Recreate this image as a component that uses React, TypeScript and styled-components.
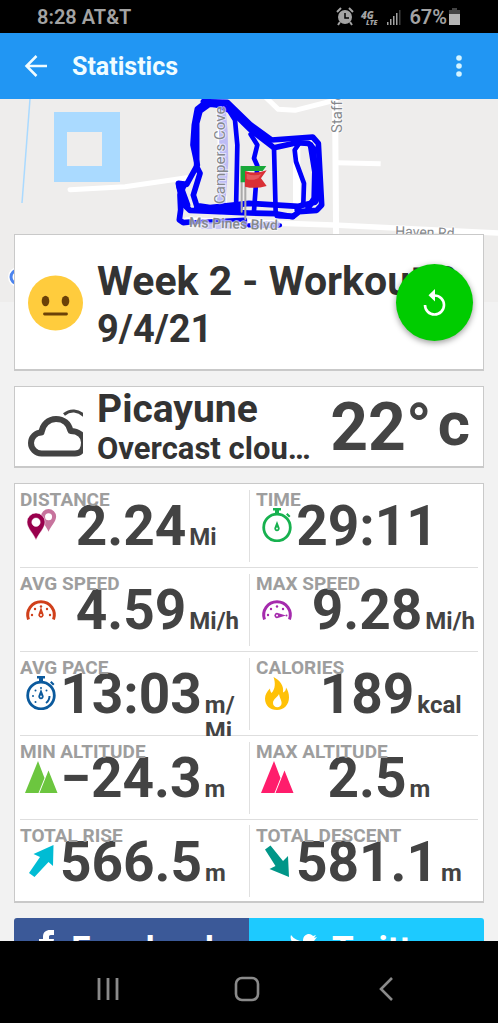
import React from "react";
import styled, { createGlobalStyle } from "styled-components";

const GlobalStyle = createGlobalStyle`
  * { box-sizing: border-box; }
  body { margin: 0; background: #000; font-family: Roboto, "Liberation Sans", sans-serif; }
  button { font: inherit; border: 0; padding: 0; background: none; color: inherit; cursor: pointer; }
  h1, h2, p, dl, dt, dd { margin: 0; }
  svg { display: block; flex: none; }
`;

const Screen = styled.div`
  display: flex;
  flex-direction: column;
  height: 100vh;
  background: #f2f2f2;
`;

const StatusBar = styled.div`
  flex: none;
  display: flex;
  align-items: center;
  justify-content: space-between;
  height: 33px;
  padding: 0 37px;
  background: #000;
  color: #a3a3a3;
  font-size: 20px;
  font-weight: 600;
`;

const StatusGroup = styled.div`
  display: flex;
  align-items: center;
`;

const AppBar = styled.header`
  flex: none;
  display: flex;
  align-items: center;
  height: 66px;
  padding: 0 24px;
  background: #2196f3;
  color: #f0fcff;
`;

const BarTitle = styled.h1`
  flex: 1;
  margin-left: 24px;
  padding-top: 2px;
  font-size: 25px;
  line-height: 32px;
  font-weight: 700;
`;

const Content = styled.main`
  flex: 1;
  min-height: 0;
  overflow: hidden;
`;

const MapSvg = styled.svg`
  width: 100%;
  height: 203px;
`;

const Stack = styled.div`
  position: relative;
  display: flex;
  flex-direction: column;
  gap: 15px;
  margin-top: -68px;
  padding: 0 14px;
`;

const Card = styled.section`
  position: relative;
  background: #fff;
  border: 1px solid #c9c9c9;
  border-bottom-width: 2px;
`;

const SummaryCard = styled(Card)<{ $height: number; $top?: number }>`
  display: flex;
  align-items: center;
  gap: 14px;
  min-height: ${(p) => p.$height}px;
  padding: ${(p) => p.$top ?? 0}px 13px 0;
  color: #333;
`;

const SummaryText = styled.div`
  flex: 1;
  min-width: 0;
`;

const Line = styled.p<{ $size: number; $line: number }>`
  overflow: hidden;
  white-space: nowrap;
  text-overflow: ellipsis;
  font-size: ${(p) => p.$size}px;
  line-height: ${(p) => p.$line}px;
  font-weight: 700;
`;

const Temperature = styled.p`
  display: flex;
  align-items: center;
  padding-top: 2px;
  margin-left: 2px;
  color: #444;
  font-size: 66px;
  line-height: 76px;
  font-weight: 700;
`;

const Celsius = styled.span`
  font-size: 62px;
  line-height: 64px;
  padding: 0 0 8px 6px;
`;

const ReplayButton = styled.button`
  position: absolute;
  top: 50%;
  right: 10px;
  display: grid;
  place-items: center;
  width: 77px;
  height: 77px;
  margin-top: -38px;
  border-radius: 50%;
  background: #00cc00;
  color: #fff;
  box-shadow: 0 2px 6px rgba(0, 0, 0, 0.4);
`;

const Row = styled.dl`
  display: grid;
  grid-template-columns: 1fr 1fr;
  column-gap: 4px;
  height: 84px;
  background:
    linear-gradient(#e0e0e0, #e0e0e0) center / 1px 72px no-repeat,
    linear-gradient(#dedede, #dedede) bottom / calc(100% - 10px) 1px no-repeat;
  &:last-child {
    height: 81px;
    background: linear-gradient(#e0e0e0, #e0e0e0) center / 1px 72px no-repeat;
  }
`;

const Cell = styled.div`
  position: relative;
  display: grid;
  grid-template-columns: minmax(0, 1fr) auto minmax(0, 1fr);
  grid-template-rows: 83px;
  align-items: baseline;
  min-width: 0;
  height: 100%;
  overflow: hidden;
  color: #434343;
`;

const Label = styled.dt`
  position: absolute;
  top: 5px;
  left: 5px;
  z-index: 1;
  color: #9e9e9e;
  font-size: 19px;
  line-height: 22px;
  font-weight: 700;
`;

const IconBox = styled.span`
  align-self: center;
  padding: 0 0 2px 9px;
`;

const Value = styled.dd`
  font-size: 55px;
  line-height: 84px;
  font-weight: 700;
`;

const Unit = styled.dd`
  padding-left: 3px;
  font-size: 24px;
  line-height: 26px;
  font-weight: 700;
`;

const ShareBar = styled.div`
  display: flex;
  border-radius: 3px;
  overflow: hidden;
`;

const ShareButton = styled.button<{ $color: string }>`
  flex: 1;
  display: flex;
  align-items: center;
  justify-content: center;
  gap: 14px;
  height: 62px;
  background: ${(p) => p.$color};
  color: #fff;
  font-size: 35px;
  font-weight: 700;
`;

const NavBar = styled.nav`
  flex: none;
  display: grid;
  grid-template-columns: repeat(3, 1fr);
  height: 82px;
  padding: 0 42px 0 38px;
  background: #000;
  color: #8a8a8a;
`;

const NavButton = styled.button`
  display: grid;
  place-items: center;
  padding-bottom: 10px;
  padding-top: 24px;
`;

function MapView() {
  return (
    <MapSvg viewBox="0 0 498 203" preserveAspectRatio="xMidYMin slice" role="img" aria-label="Route map">
      <rect width="498" height="203" fill="#eeedec" />
      <path d="M30 0 22 104" stroke="#aadaff" strokeWidth="1.5" />
      <path d="M54 13h66v70H54zM67 33v34h35V33z" fill="#aadaff" fillRule="evenodd" />
      <g transform="translate(0 -4) scale(.33333)" fill="none" strokeLinecap="round" strokeLinejoin="round">
        <g stroke="#fff">
          <path d="M210 284 375 275 560 248" strokeWidth="15" />
          <path d="M660 20 670 350M890 150V345" strokeWidth="22" />
          <path d="M1005 0 1010 640" strokeWidth="18" />
          <path d="M790 0 835 43 885 46 1007 15" strokeWidth="15" />
          <path d="M1010 203 1142 206" strokeWidth="15" strokeLinecap="butt" />
          <path d="M560 375 1000 390 1494 414" strokeWidth="17" />
        </g>
        <path d="M664 40 670 110 672 200 664 320" stroke="#bdbcf5" strokeWidth="26" />
        <g stroke="#0000fa" strokeWidth="17">
          <path d="M610 28 592 42 583 90 579 150 592 210 560 268 535 265 548 325 570 346 747 354 828 356 878 365 897 350 950 346 965 330 955 145 938 126 815 135 750 88 682 22 610 20" />
          <path d="M625 30 600 48 590 85 590 215 600 235 580 300 590 332 630 338 747 325 895 334 945 322 952 310 940 160 925 145 890 143 822 158 750 103 688 42 650 30 618 26" />
          <path d="M655 32 688 48 705 75 712 150 708 350M822 158 827 352M752 118 772 150 762 190 772 212 762 348" strokeWidth="14" />
          <path d="M897 146 884 165 888 200 912 265 910 325 890 345" strokeWidth="14" />
          <path d="M550 275 540 300 542 345 538 375 550 383 570 381M590 340 660 344 720 338M832 362 878 364" />
          <path d="M540 275 560 330" strokeWidth="22" />
          <path d="M932 150 945 230 943 310 925 338" strokeWidth="18" />
        </g>
        <path d="M570 382 660 378 735 374 735 392M745 391H840" stroke="#0000fa" strokeWidth="13" />
        <path d="M610 392H720M760 388H830" stroke="#bdbcf5" strokeWidth="20" opacity=".8" />
        <path d="M725 215V350M736 230V372" stroke="#aaa" strokeWidth="6" />
        <path d="M722 213H799L788 228H735V262H722Z" fill="#18a83a" />
        <path d="M735 228Q765 238 800 226L783 250 800 273Q765 283 735 275Z" fill="#d92f35" />
        <path d="M740 236Q765 245 785 236L775 250Q755 258 740 252Z" fill="#e6595c" />
      </g>
      <g fill="#85888c" stroke="#fff" strokeWidth="2" strokeOpacity=".6" paintOrder="stroke" fontSize="15" fontFamily="Roboto, sans-serif">
        <text transform="translate(225 105) rotate(-90)">Campers Cove</text>
        <text transform="translate(342 34) rotate(-90)">Stafford</text>
        <text transform="rotate(2 189 129)" x="189" y="128" fontWeight="500" fontSize="14">Ms Pines Blvd</text>
        <text transform="rotate(2 395 137)" x="395" y="137" fontSize="14">Haven Rd</text>
      </g>
      <circle cx="18" cy="178" r="7" fill="none" stroke="#fff" strokeWidth="6" />
      <circle cx="18" cy="178" r="7" fill="none" stroke="#4b83ee" strokeWidth="3" />
    </MapSvg>
  );
}

const PIN = "M9 0a9 9 0 0 0-9 9c0 6 6 11 9 18 3-7 9-12 9-18a9 9 0 0 0-9-9zm0 5a4.200 4.200 0 1 1 0 8.400 4.200 4.200 0 0 1 0-8.400z";

type IconName = "pins" | "timer" | "gauge" | "gaugeMax" | "pace" | "flame" | "peaks" | "up" | "down";

function StatIcon({ name, color }: { name: IconName; color: string }) {
  const stopwatch = (
    <>
      <circle cx="17" cy="19.500" r="13.300" fill="none" stroke={color} strokeWidth="2.800" />
      <path d="M13 0h8v2.500h-2v4h-4v-4h-2zM27.500 5l3 3-1.500 1.500-3-3z" fill={color} />
    </>
  );
  const needle = (
    <>
      <path d="M17 13l2.500 6.500a2.700 2.700 0 1 1-5 0z" fill={color} />
      <circle cx="17" cy="20.500" r=".9" fill="#fff" />
    </>
  );
  const dial = <path d="M4.500 27.500a13.300 13.300 0 1 1 25 0" fill="none" stroke={color} strokeWidth="3" />;
  const shapes: Record<IconName, React.ReactNode> = {
    pins: (
      <>
        <path d={PIN} fill={color} opacity=".55" transform="translate(17 1) scale(.84)" />
        <path d={PIN} fill={color} stroke="#fff" strokeWidth=".5" transform="translate(3 5)" />
      </>
    ),
    timer: <>{stopwatch}{needle}</>,
    gauge: (
      <>
        {dial}
        <path d="M17 15l2.300 6.500a2.700 2.700 0 1 1-4.600 0z" fill={color} />
        <circle cx="17" cy="23" r="1" fill="#fff" />
        <g fill={color}>
          <circle cx="8" cy="23" r="1.200" /><circle cx="11" cy="17" r="1.200" />
          <circle cx="17" cy="14.500" r="1.200" /><circle cx="23" cy="17" r="1.200" /><circle cx="26" cy="23" r="1.200" />
        </g>
      </>
    ),
    gaugeMax: (
      <>
        {dial}
        <path d="M26 23.500l-7.500 2.300a2.700 2.700 0 1 1 0-4.600z" fill={color} />
        <circle cx="17" cy="23.500" r="1" fill="#fff" />
        <g fill={color}>
          <circle cx="8" cy="23" r="1.200" /><circle cx="11" cy="17" r="1.200" />
          <circle cx="17" cy="14.500" r="1.200" /><circle cx="23" cy="17" r="1.200" /><circle cx="26.500" cy="23.500" r="1" />
        </g>
      </>
    ),
    pace: (
      <>
        {stopwatch}{needle}
        <path d="M25.500 20a8.500 8.500 0 0 1-3.500 7" fill="none" stroke={color} strokeWidth="2" />
        <g fill={color}>
          <circle cx="17" cy="12" r="1" /><circle cx="11.500" cy="14.500" r="1" /><circle cx="22.500" cy="14.500" r="1" />
          <circle cx="9" cy="20" r="1" /><circle cx="11.500" cy="26" r="1" />
        </g>
      </>
    ),
    flame: (
      <path
        d="M13.500 1c7 3.500 10.500 9 9.500 15.500 2-.5 3-2.500 3-5 2 3 3 6 3 10 0 7-5 12.500-12 12.500S5 29.500 5 22.500c0-4 2-7 5-10 0 2 .5 3 1.500 4.500 4-4 4-10.500 2-16zM19 18c-1.500 3.500-6 5-6 9a4.300 4.300 0 0 0 8.600 0c0-2.500-2-5-2.600-9z"
        fill={color}
        fillRule="evenodd"
      />
    ),
    peaks: <path d="M14 1l6.500 17L14.500 33H1zM24.500 10.500L33.500 33H15.500z" fill={color} />,
    up: <path d="M29.500 1L29 22l-4.500-4L10.500 33 5 29 16 13 9.500 10z" fill={color} />,
    down: <path d="M29 33L9.500 25l6-3L5 5.500 10.500 1.500 23 17l5-5z" fill={color} />,
  };
  return (
    <svg width="34" height="34" viewBox="0 0 34 34" aria-hidden="true">
      {shapes[name]}
    </svg>
  );
}

interface Stat {
  label: string;
  value: string;
  unit?: string;
  icon: IconName;
  color: string;
}

const STATS: [Stat, Stat][] = [
  [
    { label: "DISTANCE", value: "2.24", unit: "Mi", icon: "pins", color: "#99004d" },
    { label: "TIME", value: "29:11", icon: "timer", color: "#17b14f" },
  ],
  [
    { label: "AVG SPEED", value: "4.59", unit: "Mi/h", icon: "gauge", color: "#d0401b" },
    { label: "MAX SPEED", value: "9.28", unit: "Mi/h", icon: "gaugeMax", color: "#a52bad" },
  ],
  [
    { label: "AVG PACE", value: "13:03", unit: "m/\u200bMi", icon: "pace", color: "#0b5a9d" },
    { label: "CALORIES", value: "189", unit: "kcal", icon: "flame", color: "#ffc107" },
  ],
  [
    { label: "MIN ALTITUDE", value: "−24.3", unit: "m", icon: "peaks", color: "#6cc63f" },
    { label: "MAX ALTITUDE", value: "2.5", unit: "m", icon: "peaks", color: "#ff1d6c" },
  ],
  [
    { label: "TOTAL RISE", value: "566.5", unit: "m", icon: "up", color: "#00bcd4" },
    { label: "TOTAL DESCENT", value: "581.1", unit: "m", icon: "down", color: "#009688" },
  ],
];

function StatCell({ stat }: { stat: Stat }) {
  return (
    <Cell>
      <Label>{stat.label}</Label>
      <IconBox><StatIcon name={stat.icon} color={stat.color} /></IconBox>
      <Value>{stat.value}</Value>
      {stat.unit && <Unit>{stat.unit}</Unit>}
    </Cell>
  );
}

function StatusIcons() {
  return (
    <svg width="73" height="20" viewBox="0 0 73 20" aria-hidden="true">
      <g fill="#a3a3a3">
        <circle cx="9" cy="10" r="7" />
        <path d="M1 5l4-4M17 5l-4-4M4 15l-2 3M14 15l2 3" stroke="#a3a3a3" strokeWidth="2" />
        <path d="M9 6v5h4" fill="none" stroke="#000" strokeWidth="1.500" />
        <text x="25" y="12" fontSize="10" fontWeight="800" fontStyle="italic" fontFamily="Open Sans, sans-serif">4G</text>
        <text x="30" y="18" fontSize="7" fontWeight="800" fontStyle="italic" fontFamily="Open Sans, sans-serif">LTE</text>
        <path d="M51 15h1.500v3H51zM54 12h1.500v6H54zM57 9h1.500v9H57zM60 6h1.500v12H60z" />
        <path d="M63 3h1.500v15H63z" opacity=".4" />
      </g>
    </svg>
  );
}

export default function App() {
  return (
    <Screen>
      <GlobalStyle />
      <StatusBar>
        <span>8:28 AT&amp;T</span>
        <StatusGroup>
          <StatusIcons />
          <span>67%</span>
          <svg width="14" height="18" viewBox="0 0 14 18" aria-hidden="true">
            <path d="M5 0h5v2h3v5H2V2h3z" fill="#444" />
            <path d="M2 6h11v11H2z" fill="#b5b5b5" />
          </svg>
        </StatusGroup>
      </StatusBar>
      <AppBar>
        <button aria-label="Back">
          <svg width="24" height="24" viewBox="0 0 24 24" fill="none" stroke="currentColor" strokeWidth="2.500">
            <path d="M23 12H3M12.500 2L2.500 12l10 10" />
          </svg>
        </button>
        <BarTitle>Statistics</BarTitle>
        <button aria-label="More options">
          <svg width="30" height="24" viewBox="0 0 30 24" fill="#d5f4ff">
            <circle cx="15" cy="4" r="2.800" /><circle cx="15" cy="12" r="2.800" /><circle cx="15" cy="20" r="2.800" />
          </svg>
        </button>
      </AppBar>
      <Content>
        <MapView />
        <Stack>
          <SummaryCard $height={137} $top={2}>
            <svg width="55" height="56" viewBox="0 0 55 56" aria-label="Neutral mood" role="img">
              <circle cx="27.500" cy="28" r="27.500" fill="#ffcc3d" />
              <ellipse cx="17.500" cy="26" rx="3.800" ry="5.200" fill="#6b4108" />
              <ellipse cx="37.500" cy="26" rx="3.800" ry="5.200" fill="#6b4108" />
              <path d="M16.500 39h22" stroke="#6b4108" strokeWidth="2.800" strokeLinecap="round" />
            </svg>
            <SummaryText>
              <Line as="h2" $size={41} $line={52}>Week 2 - Workout 2</Line>
              <Line $size={38} $line={44}>9/4/21</Line>
            </SummaryText>
            <ReplayButton aria-label="Restart workout">
              <svg width="28" height="28" viewBox="0 0 28 28">
                <path d="M13.500 6.500a9.500 9.500 0 1 1-9.500 9.500" fill="none" stroke="currentColor" strokeWidth="2.600" />
                <path d="M14 0v12.500L7.500 6.300z" fill="currentColor" />
              </svg>
            </ReplayButton>
          </SummaryCard>

          <SummaryCard $height={82}>
            <svg width="55" height="60" viewBox="0 -12 55 60" aria-hidden="true" fill="none" stroke="#434343">
              <path d="M13.500 44.500a10.500 10.500 0 0 1 0-21c1-8 7-13.500 14.500-13.500s13 4.500 14.500 12c8 0 13.500 4.500 13.500 11.500s-4 11-9 11z" strokeWidth="6" strokeLinejoin="round" />
              <path d="M36 5.500c6-5 14-5 21 2" strokeWidth="3" />
            </svg>
            <SummaryText>
              <Line as="h2" $size={39} $line={44}>Picayune</Line>
              <Line $size={31} $line={35}>Overcast clouds</Line>
            </SummaryText>
            <Temperature>22°<Celsius>c</Celsius></Temperature>
          </SummaryCard>

          <Card>
            {STATS.map((pair) => (
              <Row key={pair[0].label}>
                {pair.map((stat) => <StatCell key={stat.label} stat={stat} />)}
              </Row>
            ))}
          </Card>

          <ShareBar>
            <ShareButton $color="#3b5998">
              <svg width="18" height="38" viewBox="0 0 18 38" aria-hidden="true">
                <path d="M4 29V15H0V9h4V7c0-5 3-7 7-7h4v5h-3c-2 0-2 1-2 2v2h5l-1 6h-4v14z" fill="#fff" />
              </svg>
              Facebook
            </ShareButton>
            <ShareButton $color="#1dcaff">
              <svg width="28" height="30" viewBox="0 0 28 30" aria-hidden="true">
                <path d="M1 1c3 4 7 6 12 6 0-5 3-7 6-7 2 0 3 1 4 2l3-1-2 3 3-1-3 4c0 10-7 16-15 16-4 0-7-1-9-3 3 0 6-1 8-3-3 0-5-2-5-4h2c-3-1-4-3-4-5l2 1C1 7 0 4 1 1z" fill="#fff" />
              </svg>
              Twitter
            </ShareButton>
          </ShareBar>
        </Stack>
      </Content>
      <NavBar>
        <NavButton aria-label="Recent apps">
          <svg width="24" height="24" viewBox="0 0 24 24" stroke="currentColor" strokeWidth="2.800">
            <path d="M3 1v22M12 1v22M21 1v22" />
          </svg>
        </NavButton>
        <NavButton aria-label="Home">
          <svg width="26" height="26" viewBox="0 0 26 26" fill="none" stroke="currentColor" strokeWidth="2.600">
            <rect x="2" y="2" width="22" height="22" rx="6" />
          </svg>
        </NavButton>
        <NavButton aria-label="Back">
          <svg width="24" height="24" viewBox="0 0 24 24" fill="none" stroke="currentColor" strokeWidth="2.600">
            <path d="M18 1L7 12l11 11" />
          </svg>
        </NavButton>
      </NavBar>
    </Screen>
  );
}
